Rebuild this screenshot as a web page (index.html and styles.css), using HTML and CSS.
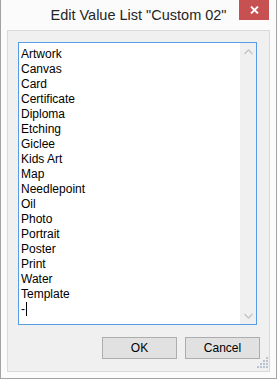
FILE: index.html
```html
<!DOCTYPE html>
<html lang="en">

<head>
    <meta charset="UTF-8">
    <meta name="viewport" content="width=device-width, initial-scale=1.0">
    <title>Edit Value List</title>
    <link rel="stylesheet" href="styles.css">
</head>

<body>
    <div class="window">
        <div class="titlebar">
            <span class="title">Edit Value List "Custom 02"</span>
            <a class="close" href="javascript:;">
                <svg width="9" height="8" viewBox="0 0 9 8">
                    <path d="M1 0.5 L8 7.5 M8 0.5 L1 7.5" stroke="#fff" stroke-width="1.8" fill="none" />
                </svg>
            </a>
        </div>
        <div class="panel">
            <div class="editor">
                <ul class="lines">
                    <li>Artwork</li>
                    <li>Canvas</li>
                    <li>Card</li>
                    <li>Certificate</li>
                    <li>Diploma</li>
                    <li>Etching</li>
                    <li>Giclee</li>
                    <li>Kids Art</li>
                    <li>Map</li>
                    <li>Needlepoint</li>
                    <li>Oil</li>
                    <li>Photo</li>
                    <li>Portrait</li>
                    <li>Poster</li>
                    <li>Print</li>
                    <li>Water</li>
                    <li>Template</li>
                    <li>-<span class="caret"></span></li>
                </ul>
                <div class="scrollbar">
                    <span class="arrow">
                        <svg width="9" height="6" viewBox="0 0 9 6">
                            <path d="M0.5 5 L4.5 1 L8.5 5" stroke="#c4c4c4" stroke-width="1.3" fill="none" />
                        </svg>
                    </span>
                    <span class="arrow">
                        <svg width="9" height="6" viewBox="0 0 9 6">
                            <path d="M0.5 1 L4.5 5 L8.5 1" stroke="#c4c4c4" stroke-width="1.3" fill="none" />
                        </svg>
                    </span>
                </div>
            </div>
            <div class="actions">
                <button class="btn">OK</button>
                <button class="btn">Cancel</button>
            </div>
            <svg class="grip" width="12" height="12" viewBox="0 0 12 12">
                <rect x="9" y="0" width="2" height="2" />
                <rect x="6" y="3" width="2" height="2" />
                <rect x="9" y="3" width="2" height="2" />
                <rect x="3" y="6" width="2" height="2" />
                <rect x="6" y="6" width="2" height="2" />
                <rect x="9" y="6" width="2" height="2" />
                <rect x="0" y="9" width="2" height="2" />
                <rect x="3" y="9" width="2" height="2" />
                <rect x="6" y="9" width="2" height="2" />
                <rect x="9" y="9" width="2" height="2" />
            </svg>
        </div>
    </div>
</body>

</html>
```

FILE: styles.css
```css
* {
    margin: 0;
    padding: 0;
    box-sizing: border-box;
}

ul {
    list-style: none;
}

body {
    background: #fff;
    font-family: "Liberation Sans", Arial, sans-serif;
}

.window {
    width: 277px;
    height: 379px;
    display: flex;
    flex-direction: column;
    background: #fbfbfb;
    border: 1px solid #a3a3a3;
    border-top: none;
}

.titlebar {
    position: relative;
    height: 30px;
    padding-top: 1px;
    line-height: 29px;
    text-align: center;
    font-size: 14.5px;
    color: #262626;
}

.close {
    position: absolute;
    top: 0;
    right: 7px;
    width: 30px;
    height: 20px;
    background: #c75050;
    display: flex;
    justify-content: center;
    align-items: center;
}

.panel {
    position: relative;
    flex: 1;
    margin: 0 6px 6px;
    padding: 11px 9px 0 10px;
    background: #f0f0f0;
    border: 1px solid #d9d9d9;
}

.editor {
    height: 283px;
    margin-right: 3px;
    display: flex;
    background: #fff;
    border: 1px solid #569de5;
}

.lines {
    flex: 1;
    padding: 4px 0 0 2px;
    font-size: 12px;
    line-height: 15px;
    color: #000;
}

.caret {
    display: inline-block;
    width: 1px;
    height: 14px;
    margin-left: 1px;
    vertical-align: -3px;
    background: #000;
}

.scrollbar {
    width: 16px;
    display: flex;
    flex-direction: column;
    justify-content: space-between;
    background: #f0f0f0;
}

.arrow {
    height: 17px;
    display: flex;
    justify-content: center;
    align-items: center;
}

.actions {
    margin-top: 12px;
    display: flex;
    justify-content: flex-end;
    gap: 8px;
}

.btn {
    width: 75px;
    height: 22px;
    font-family: "Liberation Sans", Arial, sans-serif;
    font-size: 12px;
    color: #000;
    background: #e1e1e1;
    border: 1px solid #adadad;
}

.grip {
    position: absolute;
    right: 0;
    bottom: 2px;
    fill: #b9c3cf;
}
```
